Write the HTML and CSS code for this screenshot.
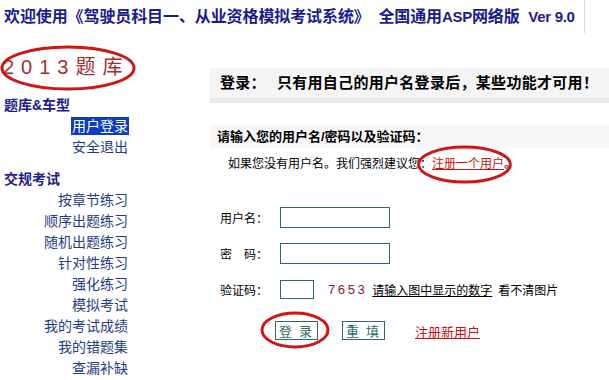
FILE: index.html
```html
<!DOCTYPE html>
<html lang="zh-CN">
<head>
    <meta charset="UTF-8">
    <title>驾驶员科目一、从业资格模拟考试系统</title>
    <link rel="stylesheet" href="styles.css">
</head>
<body>
    <div class="header">欢迎使用《驾驶员科目一、从业资格模拟考试系统》 &nbsp;全国通用<span class="latin">ASP</span>网络版 &nbsp;<span class="latin">Ver 9.0</span></div>
    <div class="page">
        <div class="side">
            <div class="logo">
                2013题库
                <svg class="mark mark-logo" viewBox="0 0 136 46"><ellipse cx="68" cy="23" rx="66" ry="21"/></svg>
            </div>
            <div class="group-title">题库&amp;车型</div>
            <ul class="menu">
                <li><a class="active" href="#">用户登录</a></li>
                <li><a href="#">安全退出</a></li>
            </ul>
            <div class="group-title second">交规考试</div>
            <ul class="menu">
                <li><a href="#">按章节练习</a></li>
                <li><a href="#">顺序出题练习</a></li>
                <li><a href="#">随机出题练习</a></li>
                <li><a href="#">针对性练习</a></li>
                <li><a href="#">强化练习</a></li>
                <li><a href="#">模拟考试</a></li>
                <li><a href="#">我的考试成绩</a></li>
                <li><a href="#">我的错题集</a></li>
                <li><a href="#">查漏补缺</a></li>
            </ul>
        </div>
        <div class="main">
            <div class="title-bar"><span class="title-key">登录：</span>只有用自己的用户名登录后，某些功能才可用！</div>
            <div class="sub-bar">请输入您的用户名/密码以及验证码：</div>
            <p class="hint">如果您没有用户名。我们强烈建议您：<span class="marked"><a class="red-link" href="#">注册一个用户</a><svg class="mark mark-reg" viewBox="0 0 98 40"><ellipse cx="49" cy="20" rx="47" ry="18"/></svg></span>。</p>
            <form class="login">
                <div class="row">
                    <label>用户名：</label>
                    <input type="text" class="field">
                </div>
                <div class="row">
                    <label>密　码：</label>
                    <input type="password" class="field">
                </div>
                <div class="row">
                    <label>验证码：</label>
                    <input type="text" class="field short">
                    <span class="code">7653</span>
                    <a class="plain-link" href="#">请输入图中显示的数字</a>
                    <span class="refresh">看不清图片</span>
                </div>
                <div class="buttons">
                    <span class="marked">
                        <button type="submit" class="btn">登 录</button>
                        <svg class="mark mark-btn" viewBox="0 0 70 38"><ellipse cx="35" cy="19" rx="33" ry="17"/></svg>
                    </span>
                    <button type="reset" class="btn">重 填</button>
                    <a class="red-link big" href="#">注册新用户</a>
                </div>
            </form>
        </div>
    </div>
</body>
</html>
```

FILE: styles.css
```css
body {
    margin: 0;
    background: #fff;
    font-family: "Liberation Sans", "Noto Sans CJK SC", sans-serif;
    color: #000;
}
.header {
    width: 580px;
    height: 33px;
    line-height: 34px;
    padding-left: 4px;
    border-right: 1px solid #d9d9d9;
    font-size: 16px;
    font-weight: bold;
    letter-spacing: -0.1px;
    color: #1b1b8e;
    white-space: nowrap;
    overflow: hidden;
}
.header .latin {
    font-size: 15px;
    letter-spacing: -0.3px;
}
.page {
    display: flex;
}
.side {
    width: 210px;
    flex: none;
}
.logo {
    position: relative;
    margin-top: 22px;
    padding-left: 3px;
    height: 24px;
    line-height: 24px;
    font-size: 20px;
    letter-spacing: 7px;
    color: #a3302c;
    white-space: nowrap;
}
.mark {
    position: absolute;
    fill: none;
    stroke: #d11414;
    stroke-width: 3;
    overflow: visible;
}
.mark-logo {
    left: 0;
    top: -10px;
    width: 136px;
    height: 46px;
}
.group-title {
    margin-top: 16px;
    padding-left: 4px;
    line-height: 20px;
    font-size: 14px;
    font-weight: bold;
    color: #1c1c8a;
}
.group-title.second {
    margin-top: 12px;
}
.menu {
    list-style: none;
    margin: 0;
    padding: 0;
    width: 129px;
    text-align: right;
}
.menu li {
    height: 21px;
    line-height: 21px;
    font-size: 14px;
}
.menu a {
    color: #1f3d86;
    text-decoration: none;
    display: inline-block;
    line-height: 18px;
    padding: 0 1px;
    vertical-align: middle;
}
.menu a.active {
    background: #0c3dc4;
    color: #fff;
}
.main {
    flex: 1;
    min-width: 0;
}
.title-bar {
    margin-top: 35px;
    height: 30px;
    line-height: 30px;
    padding-left: 10px;
    background: #f5f5f5;
    border-bottom: 5px solid #e9e9e9;
    font-size: 15px;
    font-weight: bold;
    letter-spacing: 0.3px;
    white-space: nowrap;
    overflow: hidden;
}
.title-key {
    margin-right: 11px;
}
.sub-bar {
    margin-top: 22px;
    height: 23px;
    line-height: 23px;
    padding-left: 7px;
    background: #f7f7f7;
    font-size: 13px;
    font-weight: bold;
}
.hint {
    margin: 6px 0 0;
    padding-left: 18px;
    line-height: 20px;
    font-size: 12px;
}
.marked {
    position: relative;
    display: inline-block;
}
.red-link {
    color: #c8100f;
    text-decoration: underline;
}
.mark-reg {
    left: -16px;
    top: -9px;
    width: 97px;
    height: 39px;
}
.login {
    margin-top: 33px;
    padding-left: 10px;
}
.row {
    display: flex;
    align-items: center;
    height: 21px;
    margin-bottom: 15px;
    font-size: 12px;
}
.row label {
    width: 60px;
}
.field {
    box-sizing: border-box;
    width: 110px;
    height: 21px;
    margin: 0;
    border: 1px solid #2f6b5a;
    padding: 0 3px;
    font-size: 12px;
}
.field.short {
    width: 34px;
    height: 19px;
}
.code {
    margin-left: 14px;
    font-family: "Liberation Sans", sans-serif;
    font-size: 13px;
    letter-spacing: 2.6px;
    color: #862222;
}
.plain-link {
    margin-left: 5px;
    color: #000;
    text-decoration: underline;
}
.refresh {
    margin-left: 6px;
}
.buttons {
    display: flex;
    align-items: center;
    margin-top: 20px;
    padding-left: 55px;
    height: 20px;
}
.btn {
    box-sizing: border-box;
    width: 43px;
    height: 19px;
    margin: 0;
    padding: 0;
    border: 1px solid #2f6b5a;
    background: #fff;
    color: #2f6b5a;
    font-family: "Noto Sans CJK SC", sans-serif;
    font-size: 13px;
    line-height: 17px;
    letter-spacing: 2px;
}
.buttons .marked + .btn {
    margin-left: 24px;
}
.mark-btn {
    left: -15px;
    top: -10px;
    width: 70px;
    height: 38px;
}
.red-link.big {
    margin-left: 30px;
    font-size: 13px;
    margin-top: 2px;
}
```
